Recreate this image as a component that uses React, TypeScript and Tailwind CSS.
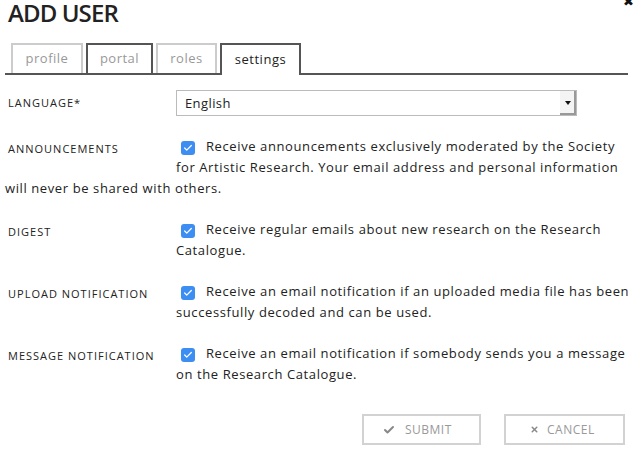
import { Check, X } from "lucide-react";

const rows = [
  {
    label: "ANNOUNCEMENTS",
    text: "Receive announcements exclusively moderated by the Society for Artistic Research. Your email address and personal information will never be shared with others.",
  },
  {
    label: "DIGEST",
    text: "Receive regular emails about new research on the Research Catalogue.",
  },
  {
    label: "UPLOAD NOTIFICATION",
    text: "Receive an email notification if an uploaded media file has been successfully decoded and can be used.",
  },
  {
    label: "MESSAGE NOTIFICATION",
    text: "Receive an email notification if somebody sends you a message on the Research Catalogue.",
  },
];

const tabs = [
  { name: "profile", w: "w-[72px]", cls: "border-[#ccc] text-[#999]" },
  { name: "portal", w: "w-[67px]", cls: "border-[#555] text-[#999]" },
  { name: "roles", w: "w-[61px]", cls: "border-[#ccc] text-[#999]" },
  { name: "settings", w: "w-[81px]", cls: "border-[#555] text-[#222] bg-white h-[32px] -mb-[2px]" },
];

function Checkbox() {
  return (
    <span className="inline-flex items-center justify-center w-[14px] h-[14px] rounded-[3px] bg-[#3d8ef3] ml-[5px] mr-[11px] align-[-2px]">
      <Check className="w-[10px] h-[10px] text-white" strokeWidth={3} />
    </span>
  );
}

export default function App() {
  return (
    <div className="relative w-[640px] h-[449px] overflow-hidden bg-white text-[#222] font-['Open_Sans',sans-serif]">
      <span className="absolute right-[6px] top-[-8px] text-[13px] text-[#111]">✖</span>

      <h1 className="pl-[8px] text-[24px] leading-[26px] font-semibold tracking-[-0.9px]">ADD USER</h1>

      {/* tabs */}
      <div className="mt-[17px] ml-[5px] mr-[12px] flex gap-[3px] pl-[6px] border-b-2 border-[#555]">
        {tabs.map((t) => (
          <div
            key={t.name}
            className={`h-[30px] ${t.w} ${t.cls} border-2 border-b-0 text-[13px] tracking-[0.5px] flex items-center justify-center`}
          >
            {t.name}
          </div>
        ))}
      </div>

      {/* language */}
      <div className="mt-[15px] ml-[5px] mr-[12px] flex items-center">
        <div className="w-[171px] pl-[3px] text-[11px] tracking-[1px]">LANGUAGE*</div>
        <div className="w-[401px] h-[26px] flex border border-[#bbb]">
          <div className="flex-1 pl-[8px] text-[13px] tracking-[0.4px] leading-[24px]">English</div>
          <div className="w-[16px] flex items-center justify-center bg-[#f4f4f4] shadow-[inset_-2px_-2px_0_#999]">
            <span className="w-0 h-0 border-l-[3px] border-r-[3px] border-t-[4px] border-l-transparent border-r-transparent border-t-[#111]" />
          </div>
        </div>
      </div>

      {/* checkbox rows */}
      <div className="mt-[20px] ml-[5px] mr-[6px]">
        {rows.map((r) => (
          <div key={r.label} className="mb-[20px] text-[13px] leading-[21px] tracking-[0.6px] flow-root">
            <div className="float-left w-[171px] h-[30px] pl-[3px] pt-[2px] text-[11px] tracking-[1px]">{r.label}</div>
            <Checkbox />
            {r.text}
          </div>
        ))}
      </div>

      {/* buttons */}
      <div className="absolute left-0 right-0 top-[414px] flex justify-end gap-[23px] pr-[15px]">
        <button className="w-[119px] h-[31px] border-2 border-[#d2d2d2] flex items-center pl-[19px] gap-[10px] text-[12px] tracking-[0.5px] text-[#999]">
          <Check className="w-[12px] h-[12px] text-[#888]" strokeWidth={4} />
          SUBMIT
        </button>
        <button className="w-[121px] h-[31px] border-2 border-[#d2d2d2] flex items-center pl-[24px] gap-[8px] text-[12px] tracking-[0.5px] text-[#999]">
          <X className="w-[9px] h-[9px] text-[#888]" strokeWidth={4} />
          CANCEL
        </button>
      </div>
    </div>
  );
}
